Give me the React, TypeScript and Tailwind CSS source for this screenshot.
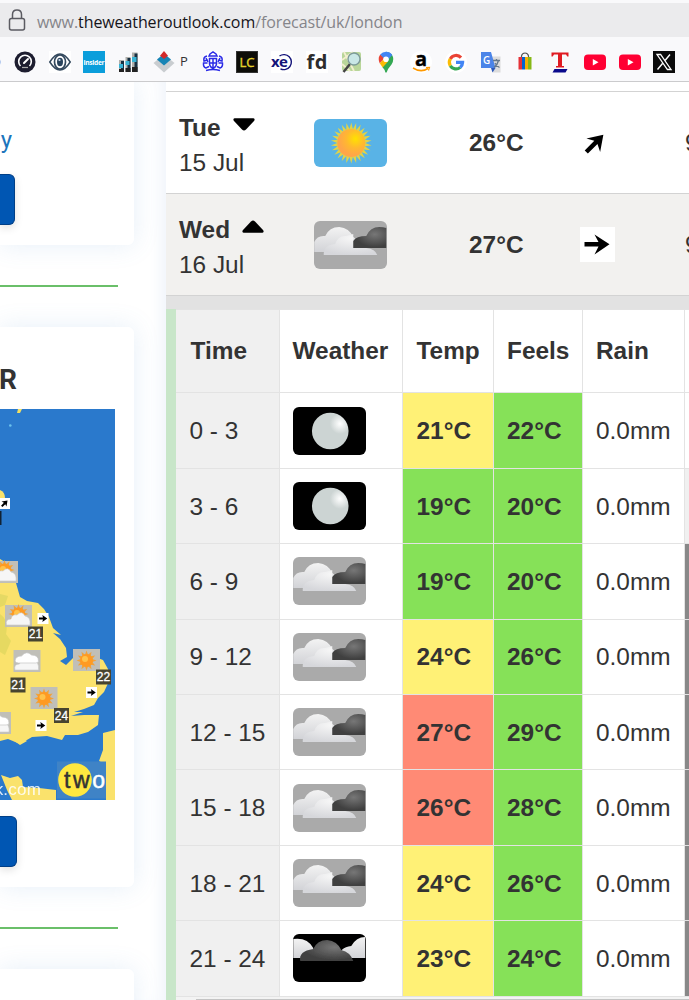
import type { ReactNode } from 'react';
import clsx from 'clsx';

type Sky = 'sun' | 'cloud' | 'moon' | 'nightCloud';

interface HourRow {
  time: string;
  sky: Sky;
  temp: number;
  tempColor: string;
  feels: number;
  rain: string;
}

const YELLOW = 'bg-[#fff176]';
const GREEN = 'bg-[#86e158]';
const RED = 'bg-[#ff8a75]';

const hours: HourRow[] = [
  { time: '0 - 3', sky: 'moon', temp: 21, tempColor: YELLOW, feels: 22, rain: '0.0mm' },
  { time: '3 - 6', sky: 'moon', temp: 19, tempColor: GREEN, feels: 20, rain: '0.0mm' },
  { time: '6 - 9', sky: 'cloud', temp: 19, tempColor: GREEN, feels: 20, rain: '0.0mm' },
  { time: '9 - 12', sky: 'cloud', temp: 24, tempColor: YELLOW, feels: 26, rain: '0.0mm' },
  { time: '12 - 15', sky: 'cloud', temp: 27, tempColor: RED, feels: 29, rain: '0.0mm' },
  { time: '15 - 18', sky: 'cloud', temp: 26, tempColor: RED, feels: 28, rain: '0.0mm' },
  { time: '18 - 21', sky: 'cloud', temp: 24, tempColor: YELLOW, feels: 26, rain: '0.0mm' },
  { time: '21 - 24', sky: 'nightCloud', temp: 23, tempColor: YELLOW, feels: 24, rain: '0.0mm' },
];

function points(cx: number, cy: number, outer: number, inner: number, n: number) {
  return Array.from({ length: n * 2 }, (_, i) => {
    const r = i % 2 ? inner : outer;
    const a = (i * Math.PI) / n;
    return `${(cx + r * Math.sin(a)).toFixed(2)},${(cy - r * Math.cos(a)).toFixed(2)}`;
  }).join(' ');
}

/* Shared gradients for the weather icons */
function Gradients() {
  return (
    <svg width="0" height="0" className="absolute">
      <defs>
        <radialGradient id="sunFill" cx="0.65" cy="0.35" r="0.6">
          <stop offset="0" stopColor="#ffe100" />
          <stop offset="0.55" stopColor="#ffb830" />
          <stop offset="1" stopColor="#ffa549" />
        </radialGradient>
        <radialGradient id="moonFill" cx="0.77" cy="0.3" r="0.28">
          <stop offset="0" stopColor="#ffffff" />
          <stop offset="1" stopColor="#ccd4d3" />
        </radialGradient>
        <linearGradient id="lightCloud" x1="0" y1="0" x2="0" y2="1">
          <stop offset="0" stopColor="#f3f3f3" />
          <stop offset="1" stopColor="#d2d3d7" />
        </linearGradient>
        <radialGradient id="frontCloud" cx="0.55" cy="0.2" r="0.8">
          <stop offset="0" stopColor="#f7f7f7" />
          <stop offset="1" stopColor="#d6d7db" />
        </radialGradient>
        <radialGradient id="darkCloud" cx="0.65" cy="0.35" r="0.6">
          <stop offset="0" stopColor="#777777" />
          <stop offset="1" stopColor="#404040" />
        </radialGradient>
        <filter id="soft">
          <feGaussianBlur stdDeviation="0.7" />
        </filter>
      </defs>
    </svg>
  );
}

function WeatherIcon({ sky }: { sky: Sky }) {
  return (
    <svg
      viewBox="0 0 72 48"
      className={clsx(
        'h-12 w-[72.5px] shrink-0 rounded-[6px]',
        sky === 'sun' && 'bg-[#59b3e6]',
        sky === 'cloud' && 'bg-[#aaaaaa]',
        (sky === 'moon' || sky === 'nightCloud') && 'bg-black'
      )}
    >
      {sky === 'sun' && (
        <>
          <polygon points={points(37, 24, 20.5, 14, 26)} fill="#dfd34a" />
          <circle cx="37" cy="24" r="14" fill="url(#sunFill)" />
        </>
      )}
      {sky === 'moon' && <circle cx="37" cy="24" r="18.3" fill="url(#moonFill)" filter="url(#soft)" />}
      {sky === 'cloud' && (
        <>
          <path d="M0 31V21Q3 14 11 15Q15 6 25 6Q35 7 39 16Q45 19 46 31Z" fill="url(#lightCloud)" />
          <path
            d="M9.500 34Q9 24 21 23Q24 14 32 15L39 13V27H52Q61 28 63 34Z"
            fill="url(#frontCloud)"
          />
          <path d="M39 27V20Q42 15 52 15Q56 6 65 6Q69 6 72 7V27Z" fill="url(#darkCloud)" />
        </>
      )}
      {sky === 'nightCloud' && (
        <>
          <path d="M0 24V5Q14 3 20 14V24Z" fill="url(#lightCloud)" />
          <path d="M46 24Q46 13 58 12Q63 3 72 3V24Z" fill="url(#lightCloud)" />
          <path
            d="M7 27Q5 17 20 15Q24 6 34 6Q44 7 48 16Q57 18 60 27Z"
            fill="url(#darkCloud)"
            filter="url(#soft)"
          />
        </>
      )}
    </svg>
  );
}

function WindArrow({ turned }: { turned?: boolean }) {
  return (
    <svg viewBox="0 0 35 35" className="-mt-px size-[35px] bg-white">
      <path
        d="M4.5 15H18.5L14.5 7.500L29.500 17.2L14.5 27.500L18.500 19.6H4.5Z"
        fill="#000"
        transform={turned ? 'rotate(-45 17.5 17.5) translate(-1.5 -0.5) scale(0.97)' : undefined}
      />
    </svg>
  );
}

function MiniArrow({ x, y, rotate = 0 }: { x: number; y: number; rotate?: number }) {
  return (
    <g transform={`translate(${x} ${y})`}>
      <rect width="11" height="11" fill="#fff" />
      <path
        d="M1.5 4.6H5.5L4.8 2L9.8 5.5L4.8 9L5.5 6.6H1.5Z"
        fill="#000"
        transform={`rotate(${rotate} 5.5 5.5)`}
      />
    </g>
  );
}

function MiniSky({ x, y, sun, cloud }: { x: number; y: number; sun?: boolean; cloud?: boolean }) {
  return (
    <g transform={`translate(${x} ${y})`}>
      <rect width="27" height="22" fill="#c0bfb8" />
      {sun && (
        <>
          <polygon points={points(13.5, cloud ? 9 : 11.5, 10, 6, 12)} fill="#f0a23a" />
          <circle cx="13.5" cy={cloud ? 9 : 11.5} r="6.5" fill="#ff9a22" />
          <circle cx="12" cy={cloud ? 8 : 10} r="3" fill="#ffc34a" />
        </>
      )}
      {cloud && (
        <path
          d="M1.5 20Q0 14 6 14Q7 9 12 10Q17 5 20 11Q26 12 25 20Z"
          fill="#f6f6f6"
          stroke="#c9c9c9"
          strokeWidth="0.6"
        />
      )}
      {cloud && !sun && (
        <path
          d="M1.5 11Q2 6 8 6Q13 0 18 5Q25 5 25 11Q25 13 22 13H5Q2 13 1.5 11Z"
          fill="#fff"
          stroke="#c4c4c4"
          strokeWidth="0.7"
        />
      )}
    </g>
  );
}

function MiniTemp({ x, y, value }: { x: number; y: number; value: number }) {
  return (
    <g>
      <rect x={x} y={y} width="15" height="15" fill="#47442f" />
      <text x={x + 7.5} y={y + 11.8} textAnchor="middle" fontSize="12" fill="#fff" stroke="#fff" strokeWidth="0.3">
        {value}
      </text>
    </g>
  );
}

function ForecastMap() {
  return (
    <svg viewBox="0 0 115 391" className="block h-[391px] w-[115px] font-['Liberation_Sans',sans-serif]">
      <rect width="115" height="391" fill="#2a79cc" />
      <path d="M17 4L18 0H22L20 4Z" fill="#f2df62" />
      <circle cx="10.3" cy="16.5" r="1.3" fill="#6cc3ee" />
      <path d="M0 81Q5 83 5 89L0 96Z" fill="#fae26c" />
      <path
        d="M0 150L10 156L16 174L20 188L27 192L38 194L44 200L49 208L53 219L61 226L53 224L60 230L66 239L67 248L60 252L66 256L73 249L90 246L103 251L108 260L110 270L104 283L98 289L94 296L84 300L74 303L83 303L71 307L84 306L99 306L98 316L88 323L78 326L65 326L62 331L47 327L32 328L20 335L8 330L0 332Z"
        fill="#fae26c"
      />
      <path d="M0 205Q9 211 6 225L11 232L5 246L0 243Z" fill="#d8d35a" opacity="0.6" />
      <path d="M0 185L8 187L5 196L0 198Z" fill="#cfcf5c" opacity="0.5" />
      <path d="M13 331L20 328L27 332L20 336Z" fill="#fae26c" />
      <path d="M115 321L103 324L103 341L99 352L106 356V391H115Z" fill="#fae26c" />
      <path d="M1 366L10 369L18 367L22 371L23 378L39 379L56 381V391H12L7 381Z" fill="#fae26c" />
      <rect y="102" width="1.5" height="14" fill="#123" />
      <MiniArrow x={-1} y={89} rotate={-45} />
      <MiniSky x={-9} y={152} sun cloud />
      <MiniSky x={5} y={196} sun cloud />
      <MiniArrow x={37.5} y={204} />
      <MiniTemp x={28} y={217.5} value={21} />
      <MiniSky x={13.5} y={241} cloud />
      <MiniSky x={73} y={240} sun />
      <MiniTemp x={96} y={260.5} value={22} />
      <MiniTemp x={10.5} y={268.5} value={21} />
      <MiniSky x={30.5} y={278} sun />
      <MiniArrow x={86} y={278} />
      <MiniSky x={-16} y={303} cloud />
      <MiniTemp x={54} y={299} value={24} />
      <MiniArrow x={35.5} y={311} />
      <text x="41" y="386" textAnchor="end" fontSize="17" fill="#fff" opacity="0.85" letterSpacing="0.2">
        k.com
      </text>
      <rect x="57" y="352.5" width="49" height="37" fill="#3f83c6" />
      <circle cx="75" cy="371" r="16.8" fill="#ffe840" />
      <text x="64" y="379" fontSize="23" fill="#333" stroke="#333" strokeWidth="0.5" textLength="41">
        tw<tspan fill="#fff" stroke="#fff">o</tspan>
      </text>
    </svg>
  );
}

/* One 22px favicon */
function Fav({ children }: { children: ReactNode }) {
  return (
    <svg viewBox="0 0 22 22" className="size-[22px] shrink-0 overflow-visible font-['Open_Sans',sans-serif]">
      {children}
    </svg>
  );
}

function YouTube() {
  return (
    <Fav>
      <rect x="0" y="3.5" width="22" height="15.5" rx="4" fill="#ff0033" />
      <path d="M8.8 8L14.5 11.2L8.8 14.4Z" fill="#fff" />
    </Fav>
  );
}

function Bookmarks() {
  return (
    <div className="-ml-[20.8px] flex h-[44px] items-center gap-[12.75px] pt-[5px]">
      <Fav>
        <circle cx="11" cy="11" r="10.3" fill="#1c5fd0" />
      </Fav>
      <Fav>
        <circle cx="11" cy="11" r="10.5" fill="#1d1d2f" />
        <path d="M6.5 15A6.3 6.3 0 1 1 15.5 15" fill="none" stroke="#fff" strokeWidth="1.6" />
        <path d="M10 12L14 8" stroke="#fff" strokeWidth="2" strokeLinecap="round" />
        <path d="M8 16.5H14" stroke="#aaa" strokeWidth="1.2" />
      </Fav>
      <Fav>
        <rect width="22" height="22" fill="#fff" />
        <path d="M0.8 11Q11 -5 21.2 11Q11 27 0.8 11Z" fill="none" stroke="#34495e" strokeWidth="1.5" />
        <ellipse cx="11" cy="11" rx="5.5" ry="7" fill="none" stroke="#34495e" strokeWidth="1.7" />
        <ellipse cx="11" cy="11" rx="3" ry="4.2" fill="#29435c" />
        <circle cx="10.5" cy="9" r="1.1" fill="#cde" />
      </Fav>
      <Fav>
        <rect width="22" height="22" fill="#0b9edb" />
        <text x="11" y="13.6" textAnchor="middle" fontSize="6.6" fontWeight="700" fill="#fff" textLength="21">
          insider
        </text>
      </Fav>
      <Fav>
        <path d="M1 9h5v12H1zM7.5 6h5v15h-5zM14 1.500h5.500v19.500H14z" fill="#b0b0ac" />
        <path d="M3 10h3v11H3zM9.500 7h3v14h-3zM16.500 2.500h3V21h-3z" fill="#173042" />
        <path d="M1 13h4v4H1zM7.500 10h4v4h-4zM14 6h4.500v5H14z" fill="#39b3d4" />
        <path d="M1 18h5v3H1zM7.500 17h5v4h-5zM14 16h5.500v5H14z" fill="#222" />
      </Fav>
      <Fav>
        <path d="M0.5 12L6 7.500L16 7.500L21.500 12L11 21.500Z" fill="#c9cdd0" />
        <path d="M4 8.500L11 2.500L18 8.500L11 14.500Z" fill="#1684b5" />
        <path d="M7 4.800L11 0L15 4.800L11 8Z" fill="#d12a2a" />
      </Fav>
      <span className="-ml-[8.8px] w-[10px] shrink-0 pl-px font-['Open_Sans',sans-serif] text-[13px] leading-none text-[#333]">
        P
      </span>
      <Fav>
        <circle cx="11" cy="11" r="11" fill="#fff" />
        <g fill="none" stroke="#2b2be6" strokeWidth="1.5">
          <path d="M7 5L8 3L11 1L14 3L15 5ZM7.5 7.5H14.5V13Q14 16.5 11 17.5Q8 16.5 7.5 13ZM11 7.5V17.500M7.5 12H14.5" />
          <path d="M5 5Q1 6 2 10L5.5 9M5.500 12L1.500 12Q1 16 4 17L7 15.500M17 5Q21 6 20 10L16.500 9M16.500 12L20.500 12Q21 16 18 17L15 15.500" />
          <path d="M4 19.5Q11 17.5 18 19.500M4 7L6 11M18 7L16 11" />
        </g>
      </Fav>
      <Fav>
        <rect x="0.5" y="0.5" width="21" height="21" fill="#0d0d08" stroke="#333" />
        <text x="11" y="15.8" textAnchor="middle" fontSize="13" fill="#e3d22a" stroke="#e3d22a" strokeWidth="0.4">
          LC
        </text>
      </Fav>
      <Fav>
        <rect width="22" height="22" fill="#fff" />
        <path d="M8.5 5A7.5 7.5 0 1 1 9.5 17.8" fill="none" stroke="#14147a" strokeWidth="1.4" />
        <text x="0" y="15.8" fontSize="15" fontWeight="700" fill="#14147a" letterSpacing="-0.6">
          xe
        </text>
      </Fav>
      <Fav>
        <rect width="22" height="22" fill="#fff" />
        <text x="11" y="18" textAnchor="middle" fontSize="20" fontWeight="700" fill="#2d2d2d" textLength="21">
          fd
        </text>
      </Fav>
      <Fav>
        <rect x="1" y="1" width="19" height="19" rx="2" fill="#b9d69a" />
        <path d="M1 13L9 20M3 1L13 20M12 1L1 9" stroke="#f3efcf" strokeWidth="1.8" />
        <path d="M9 13L2.5 21" stroke="#444" strokeWidth="2.4" />
        <circle cx="13" cy="8" r="6" fill="#c9e7e6" stroke="#7d9b98" strokeWidth="1.4" />
      </Fav>
      <Fav>
        <path
          d="M11 0.8Q14.500 0.8 16.8 3.6Q20 8.500 16.500 13.500Q12.500 18 11.6 21.500H10.4Q9.800 18.500 7.500 16.300L11 8Z"
          fill="#34a853"
        />
        <path d="M4.700 12.300L9 7.500L13 10.500L7.700 16.600Z" fill="#fbbc04" />
        <path d="M5.200 3.600Q2.500 7.500 4.700 12.300L10 6.500Z" fill="#ea4335" />
        <path d="M5.200 3.600Q7.500 0.800 11 0.800Q15 0.800 17.200 4.100L12 10L8.500 7Z" fill="#4285f4" />
        <circle cx="11" cy="8.300" r="2.800" fill="#fff" />
      </Fav>
      <Fav>
        <circle cx="11" cy="11" r="11" fill="#fff" />
        <text x="11" y="15" textAnchor="middle" fontSize="20" fontWeight="700" fill="#000" stroke="#000" strokeWidth="0.4">
          a
        </text>
        <path d="M3 17Q11 22 18 17.500" fill="none" stroke="#f90" strokeWidth="1.5" />
        <path d="M16 16.500L19.500 16.300L18.500 19.500" fill="none" stroke="#f90" strokeWidth="1.2" />
      </Fav>
      <Fav>
        <circle cx="11" cy="11" r="11" fill="#fff" />
        <g fill="none" strokeWidth="3.2">
          <path d="M16 6.600A6.600 6.600 0 0 0 5.300 7.900" stroke="#ea4335" />
          <path d="M5.300 7.900A6.600 6.600 0 0 0 5.300 14.800" stroke="#fbbc05" />
          <path d="M5.300 14.800A6.600 6.600 0 0 0 15.200 16.400" stroke="#34a853" />
          <path d="M11 11.400H17.600Q17.500 14.600 15.200 16.400" stroke="#4285f4" />
        </g>
      </Fav>
      <Fav>
        <path d="M10 5.500H20.500V21.500H13Z" fill="#dcdcdc" />
        <path d="M1 1H11L15.500 17H1Z" fill="#4b84e8" />
        <path d="M11 17H15.500L12.500 21.500Z" fill="#2c58b8" />
        <text x="3" y="12.5" fontSize="10" fontWeight="600" fill="#fff">
          G
        </text>
        <path
          d="M13 9.500H20M16.500 8V9.500M18.500 9.500Q17.500 14 14 16.500M15 12Q16.500 15 19.500 16.500"
          fill="none"
          stroke="#66788a"
          strokeWidth="1.3"
        />
      </Fav>
      <Fav>
        <path d="M7.500 7V5Q8 2 11 2Q14 2 14.500 5V7" fill="none" stroke="#555" strokeWidth="1.2" />
        <path d="M4.500 6H8V18.500H4.500Z" fill="#e53238" />
        <path d="M8 6H11V18.500H8Z" fill="#0064d2" />
        <path d="M11 6H14V18.500H11Z" fill="#f5af02" />
        <path d="M14 6H17.500V18.500H14Z" fill="#86b817" />
      </Fav>
      <Fav>
        <path
          d="M2.500 1.500H19.500V5.500H18.300L17 3.600H13V15H15V16.500H7V15H9V3.600H5L3.700 5.500H2.500Z"
          fill="#e01b22"
        />
        <path d="M5.500 18H18.500L16.500 21.500H3.500Z" fill="#0a0a8c" />
      </Fav>
      <YouTube />
      <YouTube />
      <Fav>
        <rect width="22" height="22" fill="#0b0b0b" />
        <path d="M4 3.500H7.600L18 18.500H14.400Z" fill="none" stroke="#fff" strokeWidth="1.3" />
        <path d="M17 3.500L12 9.500M9.700 12.200L4.500 18.500" stroke="#fff" strokeWidth="1.4" />
      </Fav>
    </div>
  );
}

function BrowserChrome() {
  return (
    <header className="h-[82px] shrink-0 overflow-hidden border-b border-[#cbcbcd] bg-[#f9f9fb] pt-[3px]">
      <div className="flex h-[34px] items-center bg-[#ebebed] pl-2">
        <svg viewBox="0 0 18 24" className="h-6 w-[18px]" fill="none" stroke="#5b5b62" strokeWidth="1.5">
          <rect x="1.5" y="10.5" width="15" height="11.5" rx="2" />
          <path d="M4.500 10.500V6.500Q4.500 2 9 2Q13.500 2 13.500 6.500V10.500" />
        </svg>
        <div className="ml-[11px] whitespace-nowrap pt-[3px] font-['Open_Sans',sans-serif] text-base leading-none tracking-[-0.09px] text-[#85858a]">
          www.<span className="text-[#15141a]">theweatheroutlook.com</span>/forecast/uk/london
        </div>
      </div>
      <Bookmarks />
    </header>
  );
}

const CARD = 'w-[134px] shrink-0 bg-white shadow-[0_0_26px_rgba(90,150,210,0.15)] flex flex-col';
const BUTTON =
  'h-[51px] shrink-0 rounded-r-[6px] border border-l-0 border-[#003f87] bg-[#0056b3] shadow-[0_3px_8px_rgba(0,0,0,0.12)]';

function Divider() {
  return <div className="mt-10 h-[2px] w-[118px] shrink-0 bg-[#6abf69]" />;
}

function Sidebar() {
  return (
    <aside className="flex w-[166px] shrink-0 flex-col overflow-hidden bg-white shadow-[inset_-14px_0_14px_-8px_#f1f5fb]">
      <div className={clsx(CARD, 'h-[163px] rounded-br-[6px]')}>
        <div className="flex w-3 justify-end pt-[42px] font-['Roboto',sans-serif] text-2xl leading-8 text-[#1c75bc]">
          y
        </div>
        <div className={clsx(BUTTON, 'mt-[18px] w-[15px]')} />
      </div>
      <Divider />
      <div className={clsx(CARD, 'mt-10 h-[560px] rounded-r-[6px]')}>
        <div className="flex h-[82px] w-[17px] items-center justify-end pt-[24px] font-['Roboto',sans-serif] text-[28px] font-bold text-[#333]">
          R
        </div>
        <ForecastMap />
        <div className={clsx(BUTTON, 'mt-4 w-[17px]')} />
      </div>
      <Divider />
      <div className={clsx(CARD, 'mt-10 h-[60px] rounded-tr-[6px]')} />
    </aside>
  );
}

interface DayProps {
  day: string;
  date: string;
  sky: Sky;
  temp: number;
  open?: boolean;
}

function DayRow({ day, date, sky, temp, open }: DayProps) {
  return (
    <div
      className={clsx(
        'grid h-[102px] shrink-0 grid-cols-[148px_155px_111px_105px_1fr] items-center border-t border-[#d3d3d3]',
        open ? 'bg-[#f2f1ef]' : 'bg-white'
      )}
    >
      <div className="pt-[6px] pl-[13px] leading-[34.5px]">
        <div className="flex items-center gap-3 font-bold">
          {day}
          <svg viewBox="0 0 22 13" className="-mt-2 h-[13px] w-[22px]">
            <path
              d="M1.5 0.3H20.5Q22.500 1 21 3L13 11.500Q11 13.500 9 11.500L1 3Q-0.500 1 1.5 0.3Z"
              transform={open ? 'rotate(180 11 6.5)' : undefined}
            />
          </svg>
        </div>
        <div>{date}</div>
      </div>
      <WeatherIcon sky={sky} />
      <div className="pt-px font-bold">{temp}°C</div>
      <WindArrow turned={!open} />
      <div className="pt-px">9</div>
    </div>
  );
}

const ROW =
  'grid grid-cols-[104px_123px_90.5px_89px_102px_40px] shrink-0 border-t border-[#e3e3e3] [&>*]:flex [&>*]:items-center [&>*]:border-r [&>*]:border-[#e3e3e3] [&>*]:pl-[13.5px]';

function HourTable() {
  return (
    <div className="flex flex-col border-l-[10px] border-[#c8e6c9]">
      <div className={clsx(ROW, 'h-[83.4px] bg-white font-bold')}>
        <div className="bg-[#f0f0f0]">
          <span className="pt-px pl-px">Time</span>
        </div>
        <div className="pt-px">
          <span className="-ml-px">Weather</span>
        </div>
        <div className="pt-px">Temp</div>
        <div className="pt-px">Feels</div>
        <div className="pt-px">Rain</div>
        <div />
      </div>
      {hours.map((h, i) => (
        <div key={h.time} className={clsx(ROW, 'h-[75.4px] bg-white')}>
          <div className="bg-[#f0f0f0] pt-[2px]">{h.time}</div>
          <div>
            <div className="-ml-[0.5px]">
              <WeatherIcon sky={h.sky} />
            </div>
          </div>
          <div className={clsx('pt-[2px] font-bold', h.tempColor)}>{h.temp}°C</div>
          <div className={clsx('pt-[2px] font-bold', GREEN)}>{h.feels}°C</div>
          <div className="pt-[2px]">{h.rain}</div>
          <div className={clsx(i === 1 && 'bg-[#f0f0f0]', i > 1 && 'bg-[#888888]')} />
        </div>
      ))}
      <div className="h-2 border-t border-[#e3e3e3] bg-[#f3f3f3] pt-[2px] pl-5">
        <div className="h-px bg-[#c4c4c4]" />
      </div>
    </div>
  );
}

export default function App() {
  return (
    <div className="flex h-[1000px] w-[689px] flex-col overflow-hidden bg-white">
      <Gradients />
      <BrowserChrome />
      <div className="flex min-h-0 flex-1">
        <Sidebar />
        <main className="flex w-[523px] flex-col overflow-hidden font-['Liberation_Sans',Arial,sans-serif] text-[24.4px] text-[#333]">
          <div className="h-[9px] shrink-0 bg-white" />
          <DayRow day="Tue" date="15 Jul" sky="sun" temp={26} />
          <DayRow day="Wed" date="16 Jul" sky="cloud" temp={27} open />
          <div className="h-[14px] shrink-0 border-t border-[#d3d3d3] bg-[#e2e2e2]" />
          <HourTable />
        </main>
      </div>
    </div>
  );
}
